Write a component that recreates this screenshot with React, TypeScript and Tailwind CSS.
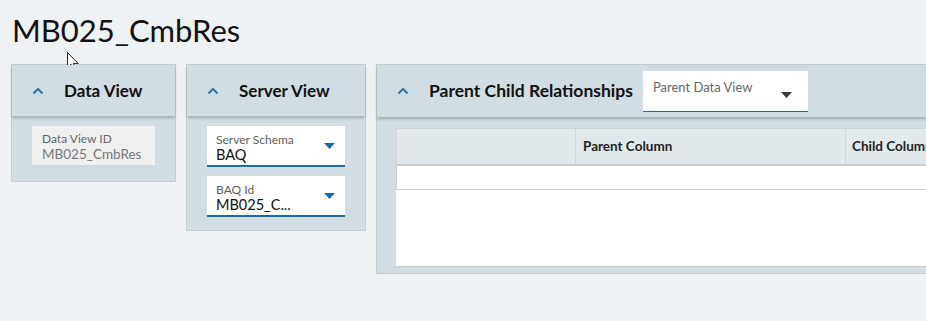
import React from "react";

const Chevron = () => (
  <svg width="12" height="8" viewBox="0 0 12 8" className="shrink-0">
    <path d="M1.5 6.5 L6 2 L10.5 6.5" fill="none" stroke="#2b75a3" strokeWidth="2" />
  </svg>
);

const Caret = ({ color = "#1a6aa0" }: { color?: string }) => (
  <svg width="11" height="6" viewBox="0 0 11 6" className="shrink-0">
    <path d="M0 0 L11 0 L5.5 6 Z" fill={color} />
  </svg>
);

const CardHeader = ({ title }: { title: string }) => (
  <div className="flex items-center h-[51px] bg-[#d1dde2] shadow-[0_2px_3px_rgba(0,0,0,0.22)] relative z-10">
    <div className="w-[52px] pl-[20px] flex items-center">
      <Chevron />
    </div>
    <span className="text-[17px] font-bold text-[#111]">{title}</span>
  </div>
);

const SelectField = ({ label, value }: { label: string; value: string }) => (
  <div className="h-[41px] bg-white border-b-2 border-[#1f6d9c] flex items-center pl-[9px] pr-[10px]">
    <div className="flex-1 flex flex-col pt-[4px]">
      <span className="text-[12px] text-[#5d5d5d] leading-[14px]">{label}</span>
      <span className="text-[14.5px] text-[#111] leading-[16px]">{value}</span>
    </div>
    <Caret />
  </div>
);

export default function App() {
  return (
    <div
      className="w-[926px] h-[321px] bg-[#eef2f5] overflow-hidden relative"
      style={{ fontFamily: "Lato, 'Noto Sans', sans-serif" }}
    >
      <div className="pl-[11px] pt-[11px]">
        <h1 className="text-[31px] leading-[38px] text-[#111] pl-[1px]">MB025_CmbRes</h1>
        <div className="flex items-start gap-[10px] mt-[15px]">
          {/* Data View */}
          <div className="w-[165px] shrink-0 h-[118px] bg-[#d1dde2] border border-[#c6cdd0]">
            <CardHeader title="Data View" />
            <div className="px-[20px] pt-[10px]">
              <div className="h-[40px] w-[123px] bg-[#f0f0f0] border-b border-[#d4d4d4] flex flex-col justify-center pl-[10px] pt-[4px]">
                <span className="text-[12px] text-[#666] leading-[14px]">Data View ID</span>
                <span className="text-[13.5px] text-[#777] leading-[17px]">MB025_CmbRes</span>
              </div>
            </div>
          </div>

          {/* Server View */}
          <div className="w-[180px] shrink-0 h-[167px] bg-[#d1dde2] border border-[#c6cdd0]">
            <CardHeader title="Server View" />
            <div className="px-[20px] pt-[10px] flex flex-col gap-[9px]">
              <SelectField label="Server Schema" value="BAQ" />
              <SelectField label="BAQ Id" value="MB025_C..." />
            </div>
          </div>

          {/* Parent Child Relationships */}
          <div className="w-[560px] shrink-0 h-[210px] bg-[#d1dde2] border border-[#c6cdd0] border-r-0">
            <div className="flex items-center h-[52px] bg-[#d1dde2] shadow-[0_2px_3px_rgba(0,0,0,0.22)] relative z-10">
              <div className="w-[52px] pl-[20px] flex items-center">
                <Chevron />
              </div>
              <span className="text-[17.5px] font-bold text-[#111]">Parent Child Relationships</span>
              <div className="ml-[10px] mt-[1px] w-[165px] h-[41px] bg-white border-b border-[#1f6d9c] flex pl-[10px] pr-[16px] pt-[8px]">
                <span className="flex-1 text-[13px] text-[#666] leading-[16px]">Parent Data View</span>
                <div className="pt-[13px]">
                  <Caret color="#3a3a3a" />
                </div>
              </div>
            </div>
            <div className="pl-[19px] pt-[11px]">
              <div className="bg-white h-[139px] border-b border-[#cccccc]">
                <div className="flex h-[38px] bg-[#e2e9ec] border-l border-t border-[#d3d3d3] border-b-2 border-b-[#cccccc]">
                  <div className="w-[179px] shrink-0 border-r border-[#d3d3d3]" />
                  <div className="w-[270px] shrink-0 border-r border-[#d3d3d3] flex items-center pl-[7px] text-[13.5px] font-bold text-[#222]">
                    Parent Column
                  </div>
                  <div className="flex-1 flex items-center pl-[6px] text-[13.5px] font-bold text-[#222] whitespace-nowrap">
                    Child Column
                  </div>
                </div>
                <div className="h-[24px] border-l border-b border-[#cccccc]" />
              </div>
            </div>
          </div>
        </div>
      </div>

      {/* mouse cursor */}
      <svg className="absolute left-[67px] top-[52px]" width="13" height="20" viewBox="0 0 13 20">
        <path d="M0.5 0.5 L0.5 15.5 L4 12.2 L6.6 18.3 L8.8 17.4 L6.3 11.4 L11.2 11.4 Z" fill="#fff" stroke="#222" strokeWidth="1" strokeLinejoin="round" />
      </svg>
    </div>
  );
}
